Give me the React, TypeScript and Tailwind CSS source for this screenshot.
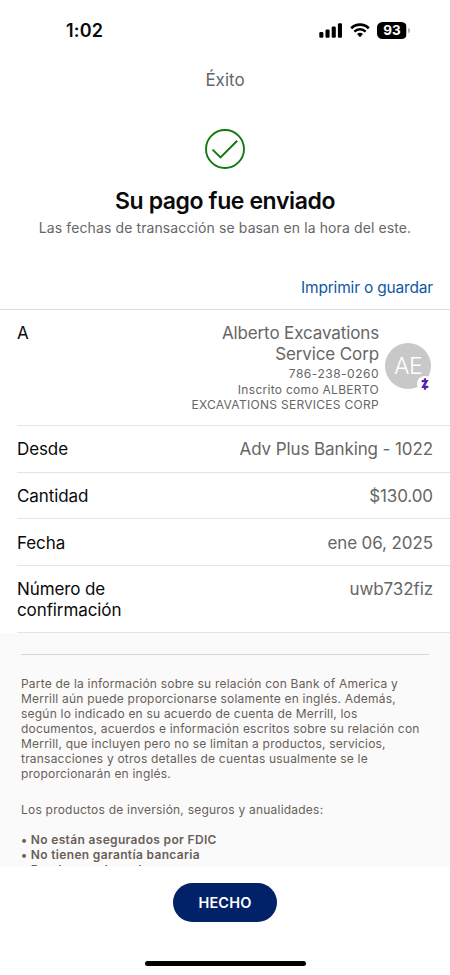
import React from 'react';

const StatusBar = () => {
  return (
    <div className="flex h-[60px] shrink-0 items-start justify-between pl-[66px] pr-[40px]">
      <span className="mt-[19px] text-[18px] leading-6 font-semibold tracking-[0.2px]">1:02</span>
      <div className="mt-[22px] flex items-start">
        <svg className="mt-px" width="24" height="16" viewBox="0 0 24 16" fill="#000">
          <rect x="0.3" y="9" width="4.1" height="5.8" rx="1.2" />
          <rect x="6.5" y="6.6" width="4.1" height="8.2" rx="1.2" />
          <rect x="12.7" y="3.6" width="4.1" height="11.2" rx="1.2" />
          <rect x="18.9" y="0.3" width="4.1" height="14.5" rx="1.2" />
        </svg>
        <svg className="ml-[7px]" width="20" height="16" viewBox="0 0 20 16">
          <path d="M1.2 6.2a12.6 12.6 0 0 1 17.6 0" fill="none" stroke="#000" strokeWidth="2.7" />
          <path d="M4.4 9.6a8 8 0 0 1 11.2 0" fill="none" stroke="#000" strokeWidth="2.6" />
          <path d="M10 15.2l-3-3.1a4.4 4.4 0 0 1 6 0z" fill="#000" />
        </svg>
        <div className="ml-[7px] flex items-center">
          <span className="flex h-[17px] w-[30px] items-center justify-center rounded-[5.5px] bg-linear-to-r from-black from-95% to-[#b5b5b5] to-95% text-[13.5px] leading-none font-bold text-white">
            93
          </span>
          <span className="ml-px h-[5px] w-[2px] rounded-r-full bg-[#b5b5b5]" />
        </div>
      </div>
    </div>
  );
};

const SuccessIcon = () => {
  return (
    <svg width="40" height="40" viewBox="0 0 40 40" fill="none" stroke="#107a10">
      <circle cx="20" cy="20" r="19" strokeWidth="1.9" />
      <path d="M7.6 20.6l7.9 7.8L32.2 11.8" strokeWidth="2" />
    </svg>
  );
};

const Avatar = () => {
  return (
    <div className="relative flex size-[46px] items-center justify-center rounded-full bg-[#c8c8c8]">
      <span className="pt-px text-[23px] font-light tracking-[-0.5px] text-white">AE</span>
      <span className="absolute right-[-2px] bottom-[-3px] flex size-4 items-center justify-center rounded-full bg-white">
        <svg width="8" height="12" viewBox="0 0 8 12" fill="none" stroke="#5b1fb0" strokeWidth="2.3">
          <path d="M0.7 3.1h4.9L2.2 8.9h5.1" />
          <path d="M4 0.2v2.5M4 9.3v2.5" />
        </svg>
      </span>
    </div>
  );
};

type RowProps = {
  label: React.ReactNode;
  value: string;
  className: string;
};

const Row = ({ label, value, className }: RowProps) => {
  return (
    <div
      className={`ml-[17px] flex shrink-0 justify-between border-b border-[#e4e4e4] pr-[17px] text-[17px] leading-[21px] tracking-[-0.1px] ${className}`}
    >
      <span>{label}</span>
      <span className="text-[#666]">{value}</span>
    </div>
  );
};

const Legal = () => {
  return (
    <section className="h-[233px] shrink-0 overflow-hidden bg-[#fafafa] px-[21px] pt-[21px] text-[12px] leading-[15px] text-[#686058]">
      <hr className="border-[#d6d6d6]" />
      <p className="mt-[21px] whitespace-nowrap tracking-[0.21px]">
        Parte de la información sobre su relación con Bank of America y
        <br />
        Merrill aún puede proporcionarse solamente en inglés. Además,
        <br />
        según lo indicado en su acuerdo de cuenta de Merrill, los
        <br />
        documentos, acuerdos e información escritos sobre su relación con
        <br />
        Merrill, que incluyen pero no se limitan a productos, servicios,
        <br />
        transacciones y otros detalles de cuentas usualmente se le
        <br />
        proporcionarán en inglés.
      </p>
      <p className="mt-[21px] tracking-[0.22px]">Los productos de inversión, seguros y anualidades:</p>
      <ul className="mt-[15px] font-semibold tracking-[0.34px]">
        <li>• No están asegurados por FDIC</li>
        <li>• No tienen garantía bancaria</li>
        <li>• Pueden perder valor</li>
      </ul>
    </section>
  );
};

const App = () => {
  return (
    <main className="flex h-[975px] w-[450px] flex-col overflow-hidden bg-white font-['Inter','Liberation_Sans',sans-serif] text-[#0a0a0a]">
      <StatusBar />
      <header className="flex h-[249px] shrink-0 flex-col items-center">
        <p className="mt-[9px] text-[17px] leading-[22px] text-[#666]">Éxito</p>
        <div className="mt-[38px]">
          <SuccessIcon />
        </div>
        <h1 className="mt-[18px] text-[23px] leading-7 font-semibold tracking-[-0.4px]">Su pago fue enviado</h1>
        <p className="mt-[3px] text-[14px] leading-5 tracking-[0.11px] text-[#666]">
          Las fechas de transacción se basan en la hora del este.
        </p>
        <a className="mt-[40px] mr-[17px] self-end text-[15.5px] leading-5 tracking-[-0.18px] text-[#1057a5]">
          Imprimir o guardar
        </a>
      </header>

      <div className="flex h-[117px] shrink-0 flex-col border-t border-[#dedede]">
        <div className="ml-[17px] flex flex-1 justify-between border-b border-[#e4e4e4] pt-[13px]">
          <span className="text-[17px] leading-[21px]">A</span>
          <div className="flex pr-[19px] text-[#666]">
            <div className="mr-[6px] text-right">
              <p className="text-[17px] leading-[21px] tracking-[-0.12px]">
                Alberto Excavations
                <br />
                Service Corp
              </p>
              <p className="text-[12px] leading-[17px] tracking-[0.5px]">786-238-0260</p>
              <p className="text-[12px] leading-[15px] tracking-[0.29px]">
                Inscrito como ALBERTO
                <br />
                EXCAVATIONS SERVICES CORP
              </p>
            </div>
            <div className="mt-[20px]">
              <Avatar />
            </div>
          </div>
        </div>
      </div>
      <Row label="Desde" value="Adv Plus Banking - 1022" className="h-[47px] pt-[13px]" />
      <Row label="Cantidad" value="$130.00" className="h-[46px] pt-[13px]" />
      <Row label="Fecha" value="ene 06, 2025" className="h-[47px] pt-[14px]" />
      <Row
        label={
          <>
            Número de
            <br />
            confirmación
          </>
        }
        value="uwb732fiz"
        className="h-[67px] pt-[13px]"
      />

      <Legal />

      <footer className="flex flex-1 flex-col items-center">
        <button className="mt-[17px] h-[39px] w-[104px] rounded-full bg-[#012169] text-[14.5px] font-semibold tracking-[0.2px] text-white">
          HECHO
        </button>
        <div className="mt-[39px] h-[5px] w-[161px] rounded-full bg-black" />
      </footer>
    </main>
  );
};

export default App;
